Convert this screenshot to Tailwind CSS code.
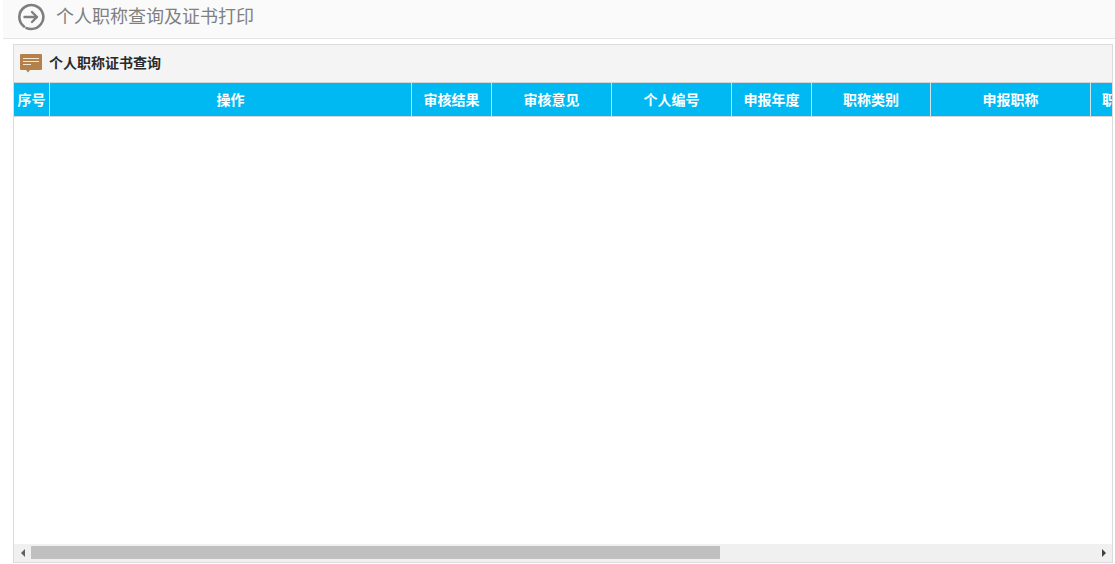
<!DOCTYPE html>
<html lang="zh">
<head>
  <meta charset="UTF-8" />
  <title>个人职称查询及证书打印</title>
  <script src="https://cdn.jsdelivr.net/npm/@tailwindcss/browser@4"></script>
</head>
<body class="bg-white h-[564px] overflow-hidden font-['Liberation_Sans','Noto_Sans_CJK_SC',sans-serif]">

  <!-- 页面标题 -->
  <div class="ml-[3px] h-[39px] bg-[#fafafa] border-b border-[#e6e6e6] flex items-center pl-[14px] pb-[5px]">
    <svg class="w-[28px] h-[28px]" viewBox="0 0 28 28" fill="none" stroke="#7f7f7f" stroke-linecap="round">
      <path d="M7 23.500A12 12 0 1 1 14 26a12 12 0 0 1-4.500-.9" stroke-width="2.600" />
      <path d="M7.500 14H20M15 9l5 5-5 5" stroke-width="2.400" stroke-linejoin="round" />
    </svg>
    <span class="ml-[11px] mt-[1px] text-[18px] text-[#808080]">个人职称查询及证书打印</span>
  </div>

  <!-- 面板 -->
  <div class="mt-[5px] ml-[13px] w-[1100px] h-[519px] border border-[#dcdcdc] flex flex-col overflow-hidden">
    <div class="h-[37px] shrink-0 bg-[#f4f4f4] flex items-center pl-[6px]">
      <svg class="w-[22px] h-[19px]" viewBox="0 0 22 19">
        <path d="M1 0h20a1 1 0 0 1 1 1v14a1 1 0 0 1-1 1H10l-2 2.500L6 16H1a1 1 0 0 1-1-1V1a1 1 0 0 1 1-1z" fill="#b5814a" />
        <path d="M3 4.500h16M3 7.500h16M3 10.500h8" stroke="#f3e6d6" stroke-width="1.200" />
      </svg>
      <span class="ml-[7px] text-[14px] font-bold text-[#2a2a2a]">个人职称证书查询</span>
    </div>

    <!-- 表头 -->
    <div class="h-[35px] shrink-0 flex bg-[#00b9f2] border-y border-[#d4d4d4] text-white text-[14px] font-bold overflow-hidden">
      <div class="w-[36px] shrink-0 pt-[1px] border-r border-[#cfe6ee] flex items-center justify-center whitespace-nowrap">序号</div>
      <div class="w-[362px] shrink-0 pt-[1px] border-r border-[#cfe6ee] flex items-center justify-center">操作</div>
      <div class="w-[80px] shrink-0 pt-[1px] border-r border-[#cfe6ee] flex items-center justify-center">审核结果</div>
      <div class="w-[120px] shrink-0 pt-[1px] border-r border-[#cfe6ee] flex items-center justify-center">审核意见</div>
      <div class="w-[120px] shrink-0 pt-[1px] border-r border-[#cfe6ee] flex items-center justify-center">个人编号</div>
      <div class="w-[80px] shrink-0 pt-[1px] border-r border-[#cfe6ee] flex items-center justify-center">申报年度</div>
      <div class="w-[119px] shrink-0 pt-[1px] border-r border-[#cfe6ee] flex items-center justify-center">职称类别</div>
      <div class="w-[160px] shrink-0 pt-[1px] border-r border-[#cfe6ee] flex items-center justify-center">申报职称</div>
      <div class="w-[80px] shrink-0 pt-[1px] flex items-center pl-[11px] whitespace-nowrap">职称</div>
    </div>

    <div class="flex-1 bg-white"></div>

    <!-- 滚动条 -->
    <div class="h-[18px] shrink-0 bg-[#f0f0f0] flex items-center">
      <div class="w-[17px] h-full flex items-center justify-center">
        <div class="border-y-[4px] border-y-transparent border-r-[4px] border-r-[#606060]"></div>
      </div>
      <div class="w-[689px] h-[13px] self-start mt-[2px] bg-[#c0c0c0]"></div>
      <div class="ml-auto w-[17px] h-full flex items-center justify-center">
        <div class="border-y-[4px] border-y-transparent border-l-[4px] border-l-[#404040]"></div>
      </div>
    </div>
  </div>

</body>
</html>
